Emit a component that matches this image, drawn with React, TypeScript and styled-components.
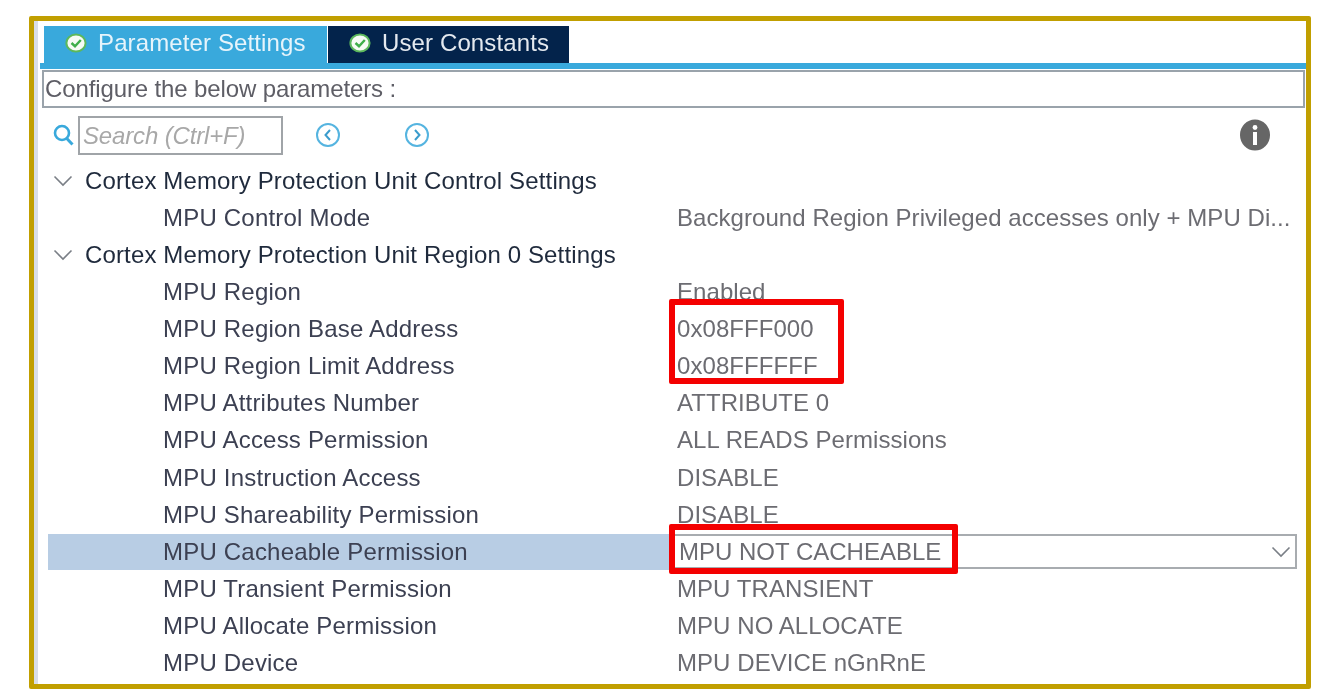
import React from "react"
import styled, { createGlobalStyle } from "styled-components"

const GlobalStyle = createGlobalStyle`
  html, body {
    margin: 0;
    background: #ffffff;
    font-family: "Liberation Sans", Arial, sans-serif;
  }
`

const Frame = styled.div`
  position: relative;
  box-sizing: border-box;
  width: 1282px;
  height: 673px;
  margin: 16px 0 0 29px;
  border: 5px solid #c19f00;
  border-radius: 2px;
  overflow: hidden;
`

const Panel = styled.div`
  height: 100%;
  box-sizing: border-box;
  border-left: 4px solid #d9dee6;
  padding-top: 5px;
  filter: blur(0.45px);
`

const TabBar = styled.div`
  display: flex;
  gap: 1px;
  height: 37px;
  margin-left: 2px;
  padding-left: 4px;
  border-bottom: 6px solid #39a9dc;
`

const Tab = styled.div<{ $active?: boolean }>`
  display: flex;
  align-items: center;
  gap: 11px;
  box-sizing: border-box;
  width: ${({ $active }) => ($active ? 283 : 241)}px;
  padding: 0 0 4px 21px;
  background: ${({ $active }) => ($active ? "#39a9dc" : "#03234b")};
  color: ${({ $active }) => ($active ? "#e6f4fb" : "#e4e9ef")};
  font-size: 24px;
  letter-spacing: 0.12px;
`

const ConfigureBox = styled.div`
  display: flex;
  align-items: center;
  box-sizing: border-box;
  height: 38px;
  margin: 1px 0 0 4px;
  width: 1263px;
  padding-left: 1px;
  border: 2px solid #9aa3ab;
  color: #5e5e66;
  font-size: 24px;
  letter-spacing: -0.12px;
`

const SearchRow = styled.div`
  display: flex;
  align-items: center;
  height: 54px;
  padding: 0 36px 0 15px;
`

const SearchInput = styled.div`
  display: flex;
  align-items: center;
  box-sizing: border-box;
  width: 205px;
  height: 39px;
  margin: 0 32px 0 4px;
  padding: 1px 0 0 3px;
  border: 2px solid #a0a4a8;
  color: #a8a8a8;
  font-size: 24px;
  font-style: italic;
  letter-spacing: -0.15px;
`

const NavButton = styled.svg`
  width: 26px;
  height: 26px;
  margin-right: 63px;
`

const InfoIcon = styled.svg`
  width: 30px;
  height: 32px;
  margin-left: auto;
`

const Tree = styled.div`
  margin: 0 9px 0 10px;
`

const SectionRow = styled.div`
  display: flex;
  align-items: center;
  height: 37.14px;
  padding-left: 5px;
  color: #1f2a3c;
  font-size: 24px;
  letter-spacing: 0.14px;
  white-space: nowrap;
`

const Chevron = styled.svg<{ $flush?: boolean }>`
  width: 20px;
  height: 12px;
  margin-right: ${({ $flush }) => ($flush ? 0 : 12)}px;
`

const ParamRow = styled.div`
  display: flex;
  align-items: center;
  height: 37.14px;
  font-size: 24px;
  white-space: nowrap;
`

const ParamLabel = styled.div<{ $selected?: boolean }>`
  display: flex;
  align-items: center;
  box-sizing: border-box;
  flex: none;
  width: 622px;
  height: 36px;
  padding-left: 115px;
  background: ${({ $selected }) => ($selected ? "#b8cde4" : "transparent")};
  color: #3c4052;
  letter-spacing: 0.2px;
`

const ParamValue = styled.div`
  flex: 1;
  min-width: 0;
  padding-left: 7px;
  color: #6c6c72;
  letter-spacing: 0.06px;
  overflow: hidden;
`

const SelectBox = styled.div`
  flex: 1;
  display: flex;
  align-items: center;
  justify-content: space-between;
  box-sizing: border-box;
  height: 35px;
  margin-left: 2px;
  padding: 0 4px 0 5px;
  border: 2px solid #a8acb0;
  color: #6c6c72;
`

const Highlight = styled.div<{ $left: number; $top: number; $width: number; $height: number }>`
  position: absolute;
  left: ${({ $left }) => $left}px;
  top: ${({ $top }) => $top}px;
  width: ${({ $width }) => $width}px;
  height: ${({ $height }) => $height}px;
  box-sizing: border-box;
  border: 6px solid #f40000;
  border-radius: 2px;
`

const CheckIcon = () => (
  <svg width="22" height="20" viewBox="0 0 22 20" style={{ flex: "none" }}>
    <ellipse cx="11" cy="10" rx="9.6" ry="8.6" fill="#f6fbf5" stroke="#5cb85c" strokeWidth="2" />
    <path d="M6.5 10 L10 13.2 L15.8 7" fill="none" stroke="#3fae4a" strokeWidth="2.4" />
  </svg>
)

const SearchIcon = () => (
  <svg width="21" height="22" viewBox="0 0 21 22" style={{ flex: "none" }}>
    <circle cx="9" cy="9" r="7" fill="none" stroke="#39a9dc" strokeWidth="2.6" />
    <path d="M13.8 14.5 L19.5 20.5" stroke="#39a9dc" strokeWidth="3" />
  </svg>
)

const NavIcon = ({ dir }: { dir: "prev" | "next" }) => (
  <NavButton viewBox="0 0 26 26">
    <circle cx="13" cy="13" r="11" fill="none" stroke="#55b4e0" strokeWidth="2" />
    <path
      d={dir === "prev" ? "M15 8 L10.5 13 L15 18" : "M11 8 L15.5 13 L11 18"}
      fill="none"
      stroke="#3a9ccd"
      strokeWidth="2"
    />
  </NavButton>
)

const ChevronPath = () => (
  <path d="M1.5 1.5 L10 10 L18.5 1.5" fill="none" stroke="#7a7f86" strokeWidth="1.6" />
)

type Row =
  | { kind: "section"; label: string }
  | { kind: "param"; label: string; value: string }
  | { kind: "select"; label: string; value: string }

const rows: Row[] = [
  { kind: "section", label: "Cortex Memory Protection Unit Control Settings" },
  { kind: "param", label: "MPU Control Mode", value: "Background Region Privileged accesses only + MPU Di..." },
  { kind: "section", label: "Cortex Memory Protection Unit Region 0 Settings" },
  { kind: "param", label: "MPU Region", value: "Enabled" },
  { kind: "param", label: "MPU Region Base Address", value: "0x08FFF000" },
  { kind: "param", label: "MPU Region Limit Address", value: "0x08FFFFFF" },
  { kind: "param", label: "MPU Attributes Number", value: "ATTRIBUTE 0" },
  { kind: "param", label: "MPU Access Permission", value: "ALL READS Permissions" },
  { kind: "param", label: "MPU Instruction Access", value: "DISABLE" },
  { kind: "param", label: "MPU Shareability Permission", value: "DISABLE" },
  { kind: "select", label: "MPU Cacheable Permission", value: "MPU NOT CACHEABLE" },
  { kind: "param", label: "MPU Transient Permission", value: "MPU TRANSIENT" },
  { kind: "param", label: "MPU Allocate Permission", value: "MPU NO ALLOCATE" },
  { kind: "param", label: "MPU Device", value: "MPU DEVICE nGnRnE" },
]

export default function App() {
  return (
    <>
      <GlobalStyle />
      <Frame>
        <Panel>
          <TabBar>
            <Tab $active>
              <CheckIcon />
              Parameter Settings
            </Tab>
            <Tab>
              <CheckIcon />
              User Constants
            </Tab>
          </TabBar>
          <ConfigureBox>Configure the below parameters :</ConfigureBox>
          <SearchRow>
            <SearchIcon />
            <SearchInput>Search (Ctrl+F)</SearchInput>
            <NavIcon dir="prev" />
            <NavIcon dir="next" />
            <InfoIcon viewBox="0 0 30 32">
              <ellipse cx="15" cy="16" rx="15" ry="15.5" fill="#666666" />
              <circle cx="15" cy="8.5" r="2.4" fill="#ffffff" />
              <rect x="13" y="13" width="4" height="13" fill="#ffffff" />
            </InfoIcon>
          </SearchRow>
          <Tree>
            {rows.map((row) => {
              if (row.kind === "section") {
                return (
                  <SectionRow key={row.label}>
                    <Chevron viewBox="0 0 20 12">
                      <ChevronPath />
                    </Chevron>
                    {row.label}
                  </SectionRow>
                )
              }
              return (
                <ParamRow key={row.label}>
                  <ParamLabel $selected={row.kind === "select"}>{row.label}</ParamLabel>
                  {row.kind === "select" ? (
                    <SelectBox>
                      {row.value}
                      <Chevron $flush viewBox="0 0 20 12">
                        <ChevronPath />
                      </Chevron>
                    </SelectBox>
                  ) : (
                    <ParamValue>{row.value}</ParamValue>
                  )}
                </ParamRow>
              )
            })}
          </Tree>
        </Panel>
        <Highlight $left={635} $top={278} $width={175} $height={85} />
        <Highlight $left={635} $top={503} $width={289} $height={50} />
      </Frame>
    </>
  )
}
